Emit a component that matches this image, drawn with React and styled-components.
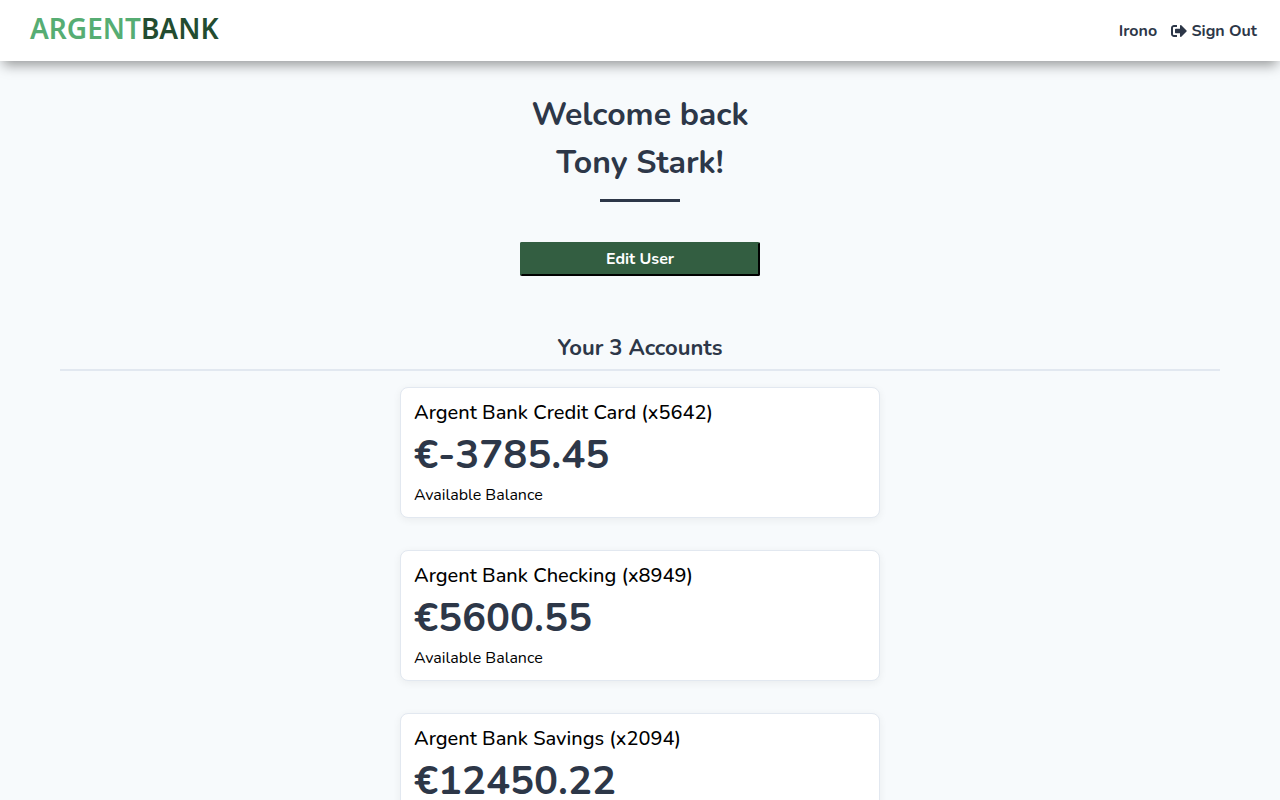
import React from "react";
import styled, { createGlobalStyle } from "styled-components";
import { FaSignOutAlt } from "react-icons/fa";

const GlobalStyle = createGlobalStyle`
  * { box-sizing: border-box; }
  html { scrollbar-width: none; }
  body {
    margin: 0;
    background: #f7fafc;
    color: #000;
    font-family: Nunito, Lato, sans-serif;
    font-size: 16px;
    line-height: 24px;
  }
  h1, h2, h3, p { margin: 0; }
`;

const Header = styled.header`
  position: relative;
  display: flex;
  align-items: center;
  justify-content: space-between;
  height: 61px;
  padding: 0 23px 0 30px;
  background: #fff;
  box-shadow: 0 7px 12px -3px rgba(0, 0, 0, 0.4);
`;

const Logo = styled.a`
  padding-bottom: 6px;
  color: #56ad73;
  font-family: "Noto Sans", "Open Sans", sans-serif;
  font-size: 28px;
  font-weight: 600;
  line-height: 32px;
  text-decoration: none;
`;

const LogoAccent = styled.span`
  color: #234c30;
`;

const Nav = styled.nav`
  display: flex;
  align-items: center;
  gap: 14px;
`;

const NavLink = styled.a`
  color: #2d3748;
  font-weight: 700;
  text-decoration: none;

  svg {
    vertical-align: -3px;
  }
`;

const Main = styled.main`
  padding: 30px 60px 40px;
`;

const Welcome = styled.section`
  display: flex;
  flex-direction: column;
  align-items: center;
  text-align: center;
`;

const Title = styled.h1`
  color: #2d3748;
  font-size: 32px;
  font-weight: 700;
  line-height: 48px;
`;

const Rule = styled.hr`
  width: 80px;
  height: 3px;
  margin: 12px 0 40px;
  border: 0;
  background: #2d3748;
`;

const EditButton = styled.button`
  width: 240px;
  height: 34px;
  padding: 0;
  border: 2px solid;
  border-color: #335e41 #000 #000 #335e41;
  border-radius: 2px;
  background: #335e41;
  color: #fff;
  font: inherit;
  font-weight: 700;
`;

const Accounts = styled.section`
  display: flex;
  flex-direction: column;
  align-items: center;
  margin-top: 56px;
`;

const AccountsTitle = styled.h2`
  align-self: stretch;
  margin-bottom: 16px;
  padding-bottom: 5px;
  border-bottom: 2px solid #e2e8f0;
  color: #2d3748;
  font-size: 22px;
  font-weight: 700;
  line-height: 32px;
  text-align: center;
`;

const AccountCard = styled.article`
  width: 100%;
  max-width: 480px;
  margin-bottom: 32px;
  padding: 10px 13px 9px;
  border: 1px solid #e2e8f0;
  border-radius: 8px;
  background: #fff;
  box-shadow: 0 2px 8px rgba(0, 0, 0, 0.06);
`;

const AccountName = styled.h3`
  font-size: 20px;
  font-weight: 500;
  line-height: 30px;
`;

const Amount = styled.p`
  color: #2d3748;
  font-size: 40px;
  font-weight: 700;
  line-height: 54px;
`;

const Caption = styled.p`
  line-height: 26px;
`;

const accounts = [
  { name: "Argent Bank Credit Card (x5642)", amount: "€-3785.45" },
  { name: "Argent Bank Checking (x8949)", amount: "€5600.55" },
  { name: "Argent Bank Savings (x2094)", amount: "€12450.22" },
];

export default function App() {
  return (
    <>
      <GlobalStyle />
      <Header>
        <Logo href="#home">
          ARGENT<LogoAccent>BANK</LogoAccent>
        </Logo>
        <Nav>
          <NavLink href="#profile">Irono</NavLink>
          <NavLink href="#signout">
            <FaSignOutAlt size={16} /> Sign Out
          </NavLink>
        </Nav>
      </Header>
      <Main>
        <Welcome>
          <Title>
            Welcome back
            <br />
            Tony Stark!
          </Title>
          <Rule />
          <EditButton type="button">Edit User</EditButton>
        </Welcome>
        <Accounts>
          <AccountsTitle>Your 3 Accounts</AccountsTitle>
          {accounts.map((account) => (
            <AccountCard key={account.name}>
              <AccountName>{account.name}</AccountName>
              <Amount>{account.amount}</Amount>
              <Caption>Available Balance</Caption>
            </AccountCard>
          ))}
        </Accounts>
      </Main>
    </>
  );
}
